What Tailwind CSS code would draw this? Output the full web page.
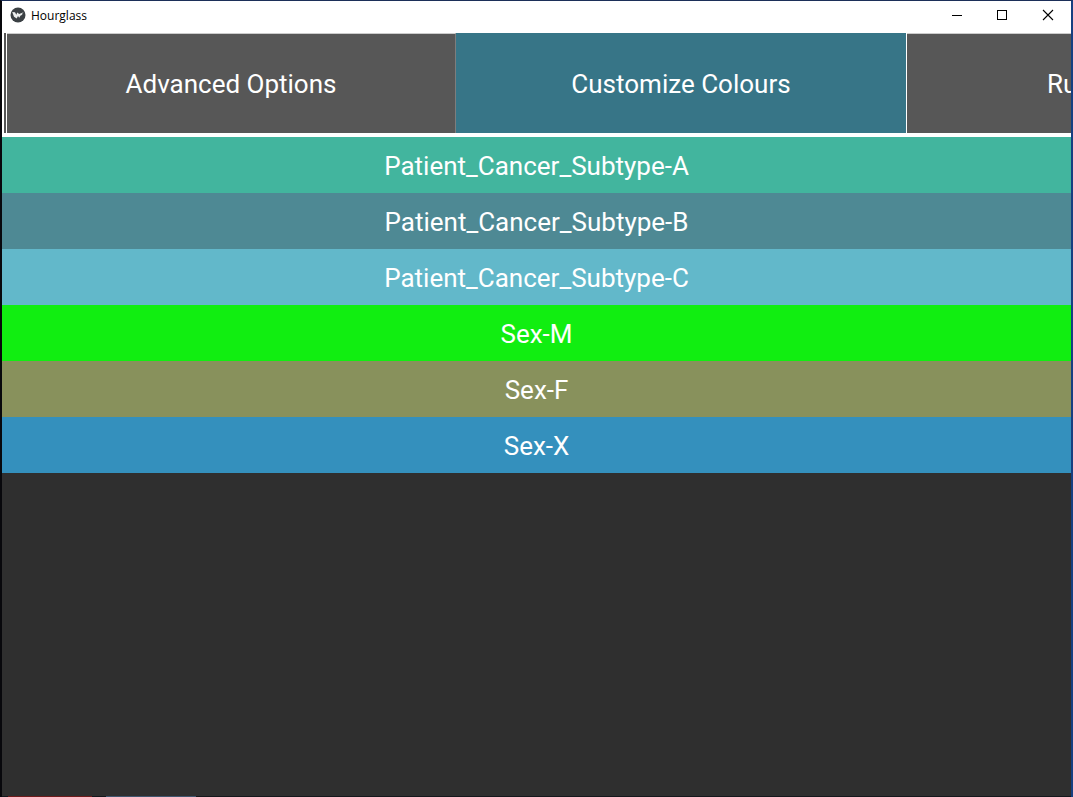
<!DOCTYPE html>
<html lang="en">
<head>
<meta charset="utf-8">
<title>Hourglass</title>
<script src="https://cdn.jsdelivr.net/npm/@tailwindcss/browser@4"></script>
</head>
<body class="h-screen overflow-hidden bg-[#0a0d14] font-['Roboto',sans-serif]">
<div class="flex h-full flex-col border-x-2 border-t border-l-[#08080c] border-r-[#163f80] border-t-[#1c2f59]">
  <header class="flex h-8 shrink-0 items-center justify-between bg-white pl-2">
    <div class="flex items-center gap-[5px] pb-1">
      <svg class="size-4" viewBox="0 0 16 16" aria-hidden="true">
        <circle cx="8" cy="8" r="7.5" fill="#3b4044"/>
        <path d="M2.2 5 5 5.3 6.3 7.8 7.3 5.4 9.1 7 13.7 5.2 11.7 7.3 12.6 7.7 10.6 8.6 9.2 10.8 8 9 6.7 11.4 4 9.7Z" fill="#eceeee"/>
      </svg>
      <h1 class="pt-0.5 font-['Open_Sans',sans-serif] text-xs text-black">Hourglass</h1>
    </div>
    <div class="flex h-full pb-1 text-black">
      <button aria-label="Minimize" class="flex w-[46px] items-center justify-center"><svg class="size-3" viewBox="0 0 12 12" fill="none" stroke="currentColor" shape-rendering="crispEdges"><path d="M2 6.5h10"/></svg></button>
      <button aria-label="Maximize" class="flex w-[46px] items-center justify-center"><svg class="size-3" viewBox="0 0 12 12" fill="none" stroke="currentColor" shape-rendering="crispEdges"><path d="M1.5 1.5h9v9h-9z"/></svg></button>
      <button aria-label="Close" class="flex w-[46px] items-center justify-center"><svg class="size-3" viewBox="0 0 12 12" fill="none" stroke="currentColor" stroke-width="1.1"><path d="m1 1 10 10M11 1 1 11"/></svg></button>
    </div>
  </header>
  <nav class="flex h-26 shrink-0 overflow-hidden bg-white pb-1 pl-0.5 text-[26px] text-white">
    <span class="mr-px w-0.5 shrink-0 bg-[#555555]"></span>
    <button class="w-[449px] shrink-0 border-t border-r border-t-[#cccccc] border-r-[#7d7d7d] bg-[#575757] pt-0.5">Advanced Options</button>
    <button class="w-[450px] shrink-0 bg-[#377587] pt-0.5">Customize Colours</button>
    <button class="ml-px w-[450px] shrink-0 border-t border-t-[#cccccc] bg-[#575757] pt-0.5 pl-[140px] text-left">Run</button>
  </nav>
  <main class="flex flex-1 flex-col bg-[#2f2f2f] text-[26px] text-white">
    <button class="h-14 bg-[#42b59e] pt-0.5">Patient_Cancer_Subtype-A</button>
    <button class="h-14 bg-[#4e8994] pt-0.5">Patient_Cancer_Subtype-B</button>
    <button class="h-14 bg-[#62b8ca] pt-0.5">Patient_Cancer_Subtype-C</button>
    <button class="h-14 bg-[#11ee11] pt-0.5">Sex-M</button>
    <button class="h-14 bg-[#88915c] pt-0.5">Sex-F</button>
    <button class="h-14 bg-[#3490bd] pt-0.5">Sex-X</button>
  </main>
  <div class="flex h-px shrink-0 bg-[#15171c] pl-1.5" aria-hidden="true">
    <span class="w-[84px] bg-[#6e1c1c]"></span>
    <span class="ml-3.5 w-[90px] bg-[#41566f]"></span>
  </div>
</div>
</body>
</html>
